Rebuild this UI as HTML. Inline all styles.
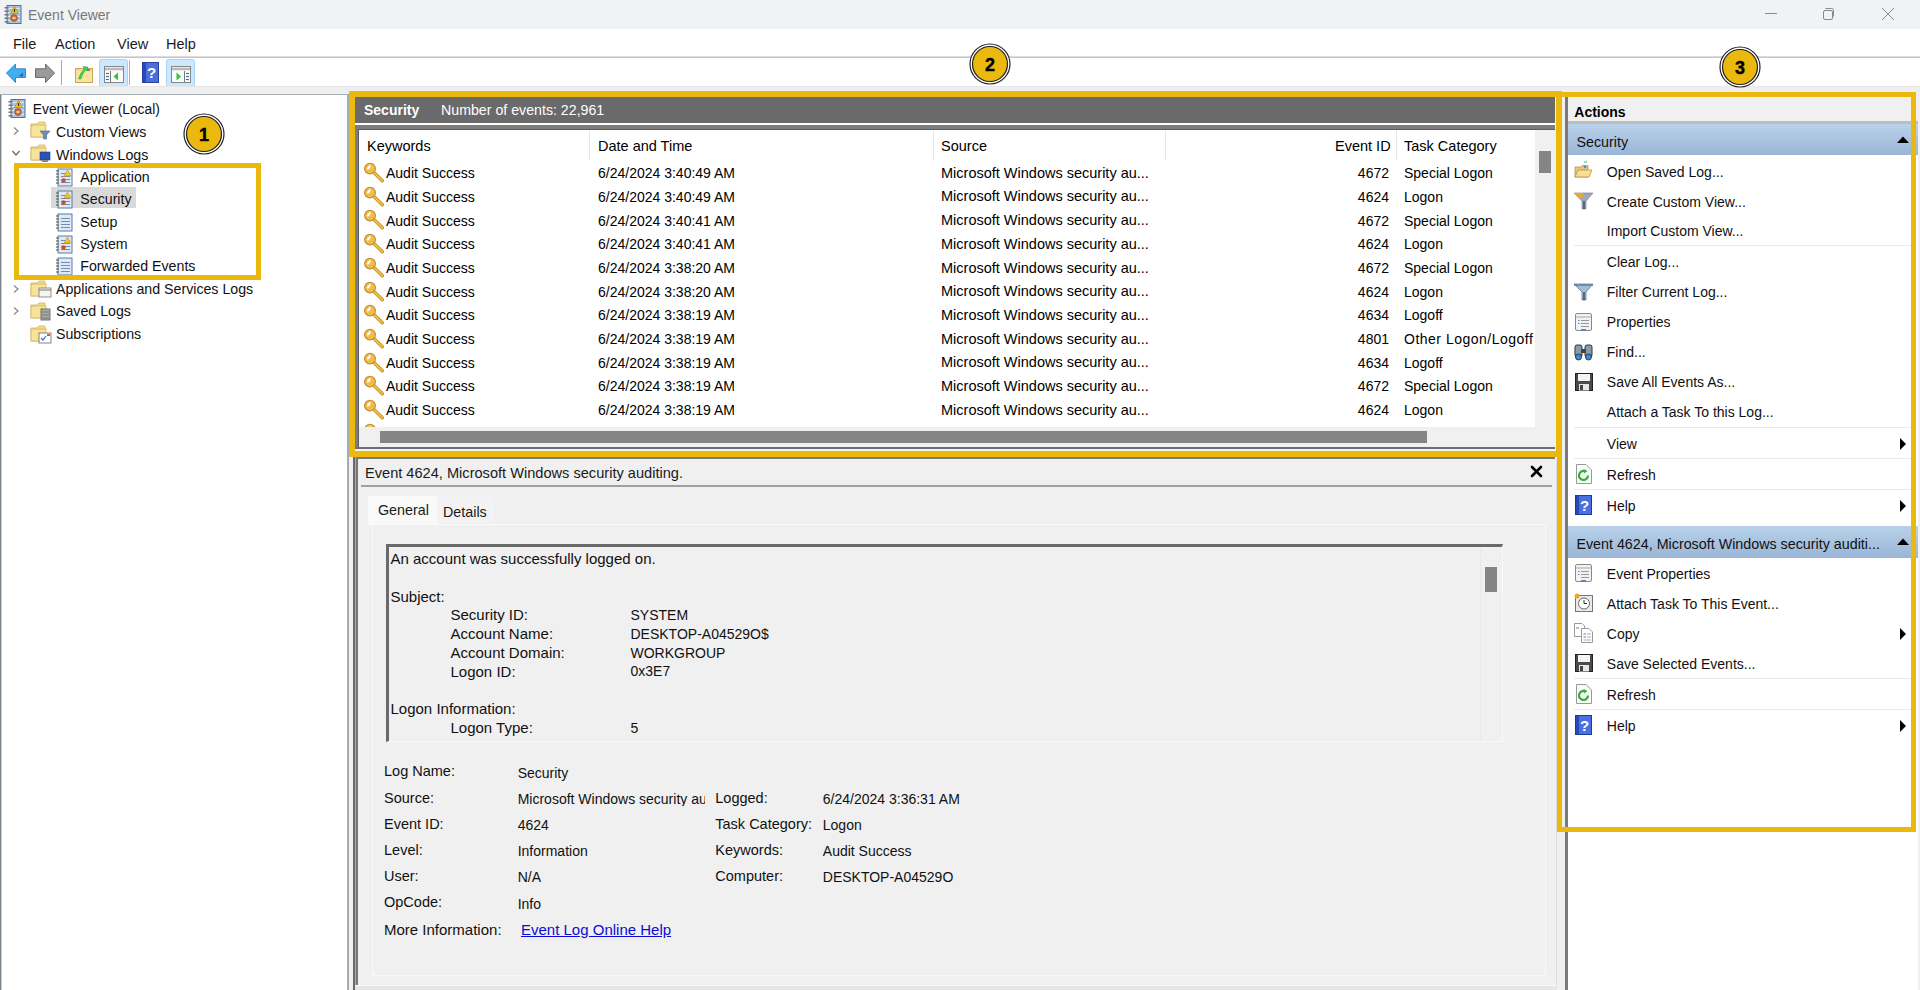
<!DOCTYPE html><html><head><meta charset="utf-8"><title>Event Viewer</title><style>
*{margin:0;padding:0;box-sizing:border-box}
html,body{width:1920px;height:990px;overflow:hidden;background:#fff;font-family:"Liberation Sans",sans-serif;}
.t{position:absolute;white-space:nowrap;line-height:1;}
.b{position:absolute;}
svg{position:absolute;overflow:visible}
</style></head><body>
<div class="b" style="left:0px;top:0px;width:1920px;height:29px;background:#f1f2f4"></div>
<div class="t" style="left:28px;top:7.75px;font-size:14px;color:#777;font-weight:normal;">Event Viewer</div>
<svg style="left:1760px;top:0" width="160" height="29"><g stroke="#8a8a8a" stroke-width="1" fill="none"><line x1="5" y1="13.5" x2="17" y2="13.5"/><rect x="63.5" y="10.5" width="9" height="9" rx="1.5"/><path d="M65.5 8.5 h6 a2 2 0 0 1 2 2 v6"/><line x1="122" y1="8" x2="134" y2="20"/><line x1="134" y1="8" x2="122" y2="20"/></g></svg>
<div class="b" style="left:0px;top:29px;width:1920px;height:27px;background:#fff"></div>
<div class="t" style="left:13px;top:37.13px;font-size:14.5px;color:#1b1b1b;font-weight:normal;">File</div>
<div class="t" style="left:55px;top:37.13px;font-size:14.5px;color:#1b1b1b;font-weight:normal;">Action</div>
<div class="t" style="left:117px;top:37.13px;font-size:14.5px;color:#1b1b1b;font-weight:normal;">View</div>
<div class="t" style="left:166px;top:37.13px;font-size:14.5px;color:#1b1b1b;font-weight:normal;">Help</div>
<div class="b" style="left:0px;top:56px;width:1920px;height:1px;background:#dcdcdc"></div>
<div class="b" style="left:0px;top:57px;width:1920px;height:1px;background:#c6c6c6"></div>
<div class="b" style="left:0px;top:58px;width:1920px;height:28px;background:#fff"></div>
<svg style="left:0;top:58px" width="200" height="28"><path d="M6.5 15 L15.5 6 V10.8 H25.5 V19.5 H15.5 V24.5 Z" fill="#3eb0ef" stroke="#4a7fd0" stroke-width="1"/><path d="M19 18 L23 14.5 V18.5 Z" fill="#3a50c0"/><path d="M54.5 15 L45.5 6 V10.8 H35.5 V19.5 H45.5 V24.5 Z" fill="#9a9a9a" stroke="#6a6a6a" stroke-width="1"/><line x1="61.5" y1="2" x2="61.5" y2="27" stroke="#a8a8a8" stroke-width="1"/><rect x="75.5" y="10.5" width="17" height="14" fill="#f4d98a" stroke="#c9a55a" stroke-width="1"/><rect x="76" y="13" width="16" height="11" fill="#f8e3a0"/><rect x="86" y="11" width="4" height="2" fill="#4a8de0"/><path d="M78.5 21 Q80 15 84 11 L83 8.5 L88 9 L86.5 13 L85.5 12 Q82.5 15.5 81 21 Z" fill="#4ccc4a" stroke="#3aa03a" stroke-width="0.5"/><rect x="99.5" y="1.5" width="28" height="27" rx="2" fill="#cce8ff" stroke="#a6d3f7" stroke-width="1"/><line x1="129.5" y1="2" x2="129.5" y2="27" stroke="#b0b0b0" stroke-width="1"/><rect x="104.5" y="8.5" width="19" height="16" fill="#eaeaea" stroke="#858585" stroke-width="1"/><line x1="105" y1="11" x2="123" y2="11" stroke="#888" stroke-width="1"/><rect x="105" y="13" width="5" height="11" fill="#fff"/><rect x="111" y="13" width="12" height="11" fill="#fafafa"/><line x1="110.5" y1="13" x2="110.5" y2="24" stroke="#777" stroke-width="1"/><g stroke="#3b6fb5" stroke-width="1.2"><line x1="106" y1="15.5" x2="109" y2="15.5"/><line x1="106" y1="18.5" x2="109" y2="18.5"/><line x1="106" y1="21.5" x2="109" y2="21.5"/></g><path d="M113.5 18.5 L118 14.5 V22.5 Z" fill="#3cbf3c"/><rect x="142.5" y="4.5" width="16" height="20" fill="#4a6fe0" stroke="#2a3f9a" stroke-width="1"/><rect x="143" y="5" width="3" height="19" fill="#2c47b8"/><text x="151.5" y="20" text-anchor="middle" font-family="Liberation Sans" font-weight="bold" font-size="15" fill="#fff">?</text><rect x="166.5" y="1.5" width="28" height="27" rx="2" fill="#cce8ff" stroke="#a6d3f7" stroke-width="1"/><rect x="171.5" y="8.5" width="19" height="16" fill="#eaeaea" stroke="#858585" stroke-width="1"/><line x1="172" y1="11" x2="190" y2="11" stroke="#888" stroke-width="1"/><rect x="172" y="13" width="12" height="11" fill="#fafafa"/><rect x="185" y="13" width="5" height="11" fill="#fff"/><line x1="184.5" y1="13" x2="184.5" y2="24" stroke="#777" stroke-width="1"/><g stroke="#3b6fb5" stroke-width="1.2"><line x1="186" y1="15.5" x2="189" y2="15.5"/><line x1="186" y1="18.5" x2="189" y2="18.5"/><line x1="186" y1="21.5" x2="189" y2="21.5"/></g><path d="M176.5 14.5 L181 18.5 L176.5 22.5 Z" fill="#3cbf3c"/></svg>
<div class="b" style="left:0px;top:86px;width:1920px;height:8px;background:#efefef"></div>
<div class="b" style="left:0px;top:86px;width:1920px;height:1px;background:#e6e6e6"></div>
<div class="b" style="left:0px;top:94px;width:349px;height:896px;background:#fff;border:1px solid #a6aeb6;border-left:1px solid #7e868e;border-right:2px solid #a3abb3;border-bottom:none;box-shadow:inset 1px 0 #c4c9ce"></div>
<div class="b" style="left:349px;top:94px;width:4px;height:896px;background:#f0f0f0"></div>
<div class="b" style="left:7px;top:99px;width:19px;height:19px"><svg width="20" height="20" viewBox="0 0 20 20"><rect x="4" y="0.5" width="14" height="18" fill="#a9c3e0" stroke="#4f74a0" stroke-width="1"/><g stroke="#dbe7f4" stroke-width="1"><line x1="5" y1="3.5" x2="17" y2="3.5"/><line x1="5" y1="7.5" x2="17" y2="7.5"/><line x1="5" y1="11.5" x2="17" y2="11.5"/><line x1="5" y1="15.5" x2="17" y2="15.5"/></g><g fill="#777"><rect x="1.5" y="2" width="4" height="1.5"/><rect x="1.5" y="5.5" width="4" height="1.5"/><rect x="1.5" y="9" width="4" height="1.5"/><rect x="1.5" y="12.5" width="4" height="1.5"/><rect x="1.5" y="16" width="4" height="1.5"/></g><path d="M11.5 1.5 L15.5 8.5 H7.5 Z" fill="#f2c12e" stroke="#a88410" stroke-width="0.7"/><line x1="11.5" y1="4" x2="11.5" y2="7" stroke="#333" stroke-width="1.2"/><circle cx="11" cy="13" r="3.3" fill="#d8703a" stroke="#8a4420" stroke-width="0.8"/><rect x="9.5" y="12" width="3" height="2" fill="#f2c8a8"/></svg></div>
<div class="t" style="left:32.8px;top:103.22px;font-size:13.8px;color:#111;font-weight:normal;">Event Viewer (Local)</div>
<svg style="left:12px;top:126px" width="8" height="10"><path d="M2 1.5 L6 5 L2 8.5" stroke="#888" stroke-width="1.2" fill="none"/></svg>
<svg style="left:11px;top:149px" width="10" height="8"><path d="M1.5 2 L5 6 L8.5 2" stroke="#666" stroke-width="1.2" fill="none"/></svg>
<svg style="left:12px;top:284px" width="8" height="10"><path d="M2 1.5 L6 5 L2 8.5" stroke="#888" stroke-width="1.2" fill="none"/></svg>
<svg style="left:12px;top:306px" width="8" height="10"><path d="M2 1.5 L6 5 L2 8.5" stroke="#888" stroke-width="1.2" fill="none"/></svg>
<div class="b" style="left:30px;top:120px"><svg width="22" height="20" viewBox="0 0 22 20"><path d="M1 4 H7 L9 2 H15 V17 H1 Z" fill="#f3dc8c" stroke="#d2b461" stroke-width="0.8"/><rect x="1" y="5" width="15" height="12" fill="#f6e39c" stroke="#d2b461" stroke-width="0.8"/><path d="M10 11 H20 L16.5 15 V19 H13.5 V15 Z" fill="#6b8fb5" stroke="#4a6d93" stroke-width="0.6"/></svg></div>
<div class="b" style="left:30px;top:143px"><svg width="22" height="20" viewBox="0 0 22 20"><path d="M1 4 H7 L9 2 H15 V17 H1 Z" fill="#f3dc8c" stroke="#d2b461" stroke-width="0.8"/><rect x="1" y="5" width="15" height="12" fill="#f6e39c" stroke="#d2b461" stroke-width="0.8"/><rect x="10" y="9" width="10" height="8" fill="#2a52b8" stroke="#1a3a8a" stroke-width="0.6"/><rect x="12" y="17" width="6" height="2" fill="#888"/></svg></div>
<div class="t" style="left:56px;top:125.08px;font-size:14.2px;color:#111;font-weight:normal;">Custom Views</div>
<div class="t" style="left:56px;top:147.58px;font-size:14.2px;color:#111;font-weight:normal;">Windows Logs</div>
<div class="b" style="left:51px;top:187px;width:85px;height:21px;background:#d9d9d9"></div>
<div class="b" style="left:55px;top:167.8px;width:19px;height:19px"><svg width="19" height="19" viewBox="0 0 19 19"><rect x="3" y="1" width="14" height="17" fill="#dfe9f5" stroke="#5a7ba6" stroke-width="1"/><g stroke="#6f8fb8" stroke-width="1"><line x1="6" y1="5.5" x2="15" y2="5.5"/><line x1="6" y1="8.5" x2="15" y2="8.5"/><line x1="6" y1="11.5" x2="15" y2="11.5"/><line x1="6" y1="14.5" x2="15" y2="14.5"/></g><g stroke="#666" stroke-width="1.2"><line x1="1" y1="3" x2="4" y2="3"/><line x1="1" y1="6" x2="4" y2="6"/><line x1="1" y1="9" x2="4" y2="9"/><line x1="1" y1="12" x2="4" y2="12"/><line x1="1" y1="15" x2="4" y2="15"/></g><path d="M12.5 2 L16 8 H9 Z" fill="#f2c530" stroke="#c99a10" stroke-width="0.6"/><circle cx="8.5" cy="12.5" r="2.2" fill="#c4542a"/></svg></div>
<div class="t" style="left:80.3px;top:169.78px;font-size:14.2px;color:#111;font-weight:normal;">Application</div>
<div class="b" style="left:55px;top:190.20000000000002px;width:19px;height:19px"><svg width="19" height="19" viewBox="0 0 19 19"><rect x="3" y="1" width="14" height="17" fill="#dfe9f5" stroke="#5a7ba6" stroke-width="1"/><g stroke="#6f8fb8" stroke-width="1"><line x1="6" y1="5.5" x2="15" y2="5.5"/><line x1="6" y1="8.5" x2="15" y2="8.5"/><line x1="6" y1="11.5" x2="15" y2="11.5"/><line x1="6" y1="14.5" x2="15" y2="14.5"/></g><g stroke="#666" stroke-width="1.2"><line x1="1" y1="3" x2="4" y2="3"/><line x1="1" y1="6" x2="4" y2="6"/><line x1="1" y1="9" x2="4" y2="9"/><line x1="1" y1="12" x2="4" y2="12"/><line x1="1" y1="15" x2="4" y2="15"/></g><path d="M12.5 2 L16 8 H9 Z" fill="#f2c530" stroke="#c99a10" stroke-width="0.6"/><circle cx="8.5" cy="12.5" r="2.2" fill="#c4542a"/></svg></div>
<div class="t" style="left:80.3px;top:192.18px;font-size:14.2px;color:#111;font-weight:normal;">Security</div>
<div class="b" style="left:55px;top:212.60000000000002px;width:19px;height:19px"><svg width="19" height="19" viewBox="0 0 19 19"><rect x="3" y="1" width="14" height="17" fill="#dfe9f5" stroke="#5a7ba6" stroke-width="1"/><g stroke="#6f8fb8" stroke-width="1"><line x1="6" y1="5.5" x2="15" y2="5.5"/><line x1="6" y1="8.5" x2="15" y2="8.5"/><line x1="6" y1="11.5" x2="15" y2="11.5"/><line x1="6" y1="14.5" x2="15" y2="14.5"/></g><g stroke="#666" stroke-width="1.2"><line x1="1" y1="3" x2="4" y2="3"/><line x1="1" y1="6" x2="4" y2="6"/><line x1="1" y1="9" x2="4" y2="9"/><line x1="1" y1="12" x2="4" y2="12"/><line x1="1" y1="15" x2="4" y2="15"/></g></svg></div>
<div class="t" style="left:80.3px;top:214.58px;font-size:14.2px;color:#111;font-weight:normal;">Setup</div>
<div class="b" style="left:55px;top:235.0px;width:19px;height:19px"><svg width="19" height="19" viewBox="0 0 19 19"><rect x="3" y="1" width="14" height="17" fill="#dfe9f5" stroke="#5a7ba6" stroke-width="1"/><g stroke="#6f8fb8" stroke-width="1"><line x1="6" y1="5.5" x2="15" y2="5.5"/><line x1="6" y1="8.5" x2="15" y2="8.5"/><line x1="6" y1="11.5" x2="15" y2="11.5"/><line x1="6" y1="14.5" x2="15" y2="14.5"/></g><g stroke="#666" stroke-width="1.2"><line x1="1" y1="3" x2="4" y2="3"/><line x1="1" y1="6" x2="4" y2="6"/><line x1="1" y1="9" x2="4" y2="9"/><line x1="1" y1="12" x2="4" y2="12"/><line x1="1" y1="15" x2="4" y2="15"/></g><path d="M12.5 2 L16 8 H9 Z" fill="#f2c530" stroke="#c99a10" stroke-width="0.6"/><circle cx="8.5" cy="12.5" r="2.2" fill="#c4542a"/></svg></div>
<div class="t" style="left:80.3px;top:236.98px;font-size:14.2px;color:#111;font-weight:normal;">System</div>
<div class="b" style="left:55px;top:257.4px;width:19px;height:19px"><svg width="19" height="19" viewBox="0 0 19 19"><rect x="3" y="1" width="14" height="17" fill="#dfe9f5" stroke="#5a7ba6" stroke-width="1"/><g stroke="#6f8fb8" stroke-width="1"><line x1="6" y1="5.5" x2="15" y2="5.5"/><line x1="6" y1="8.5" x2="15" y2="8.5"/><line x1="6" y1="11.5" x2="15" y2="11.5"/><line x1="6" y1="14.5" x2="15" y2="14.5"/></g><g stroke="#666" stroke-width="1.2"><line x1="1" y1="3" x2="4" y2="3"/><line x1="1" y1="6" x2="4" y2="6"/><line x1="1" y1="9" x2="4" y2="9"/><line x1="1" y1="12" x2="4" y2="12"/><line x1="1" y1="15" x2="4" y2="15"/></g></svg></div>
<div class="t" style="left:80.3px;top:259.38px;font-size:14.2px;color:#111;font-weight:normal;">Forwarded Events</div>
<div class="b" style="left:30px;top:279px"><svg width="22" height="20" viewBox="0 0 22 20"><path d="M1 4 H7 L9 2 H15 V17 H1 Z" fill="#f3dc8c" stroke="#d2b461" stroke-width="0.8"/><rect x="1" y="5" width="15" height="12" fill="#f6e39c" stroke="#d2b461" stroke-width="0.8"/><rect x="9" y="9" width="12" height="9" fill="#f5f5f5" stroke="#777" stroke-width="0.8"/><line x1="9" y1="11" x2="21" y2="11" stroke="#777" stroke-width="1"/></svg></div>
<div class="b" style="left:30px;top:301px"><svg width="22" height="20" viewBox="0 0 22 20"><path d="M1 4 H7 L9 2 H15 V17 H1 Z" fill="#f3dc8c" stroke="#d2b461" stroke-width="0.8"/><rect x="1" y="5" width="15" height="12" fill="#f6e39c" stroke="#d2b461" stroke-width="0.8"/><rect x="11" y="8" width="9" height="11" fill="#b0b0b0" stroke="#555" stroke-width="0.8"/><g stroke="#555" stroke-width="0.7"><line x1="12" y1="11" x2="19" y2="11"/><line x1="12" y1="14" x2="19" y2="14"/><line x1="12" y1="17" x2="19" y2="17"/></g></svg></div>
<div class="b" style="left:30px;top:324px"><svg width="22" height="20" viewBox="0 0 22 20"><path d="M1 4 H7 L9 2 H15 V17 H1 Z" fill="#f3dc8c" stroke="#d2b461" stroke-width="0.8"/><rect x="1" y="5" width="15" height="12" fill="#f6e39c" stroke="#d2b461" stroke-width="0.8"/><rect x="9" y="9" width="12" height="10" fill="#fff" stroke="#666" stroke-width="0.8"/><path d="M11 14 l2 2 l3 -4" stroke="#2a70c8" stroke-width="1.2" fill="none"/><rect x="17" y="10" width="3" height="2" fill="#d45a2a"/></svg></div>
<div class="t" style="left:56px;top:282.08px;font-size:14.2px;color:#111;font-weight:normal;">Applications and Services Logs</div>
<div class="t" style="left:56px;top:304.38px;font-size:14.2px;color:#111;font-weight:normal;">Saved Logs</div>
<div class="t" style="left:56px;top:326.98px;font-size:14.2px;color:#111;font-weight:normal;">Subscriptions</div>
<div class="b" style="left:3px;top:5px;width:19px;height:19px"><svg width="20" height="20" viewBox="0 0 20 20"><rect x="4" y="0.5" width="14" height="18" fill="#a9c3e0" stroke="#4f74a0" stroke-width="1"/><g stroke="#dbe7f4" stroke-width="1"><line x1="5" y1="3.5" x2="17" y2="3.5"/><line x1="5" y1="7.5" x2="17" y2="7.5"/><line x1="5" y1="11.5" x2="17" y2="11.5"/><line x1="5" y1="15.5" x2="17" y2="15.5"/></g><g fill="#777"><rect x="1.5" y="2" width="4" height="1.5"/><rect x="1.5" y="5.5" width="4" height="1.5"/><rect x="1.5" y="9" width="4" height="1.5"/><rect x="1.5" y="12.5" width="4" height="1.5"/><rect x="1.5" y="16" width="4" height="1.5"/></g><path d="M11.5 1.5 L15.5 8.5 H7.5 Z" fill="#f2c12e" stroke="#a88410" stroke-width="0.7"/><line x1="11.5" y1="4" x2="11.5" y2="7" stroke="#333" stroke-width="1.2"/><circle cx="11" cy="13" r="3.3" fill="#d8703a" stroke="#8a4420" stroke-width="0.8"/><rect x="9.5" y="12" width="3" height="2" fill="#f2c8a8"/></svg></div>
<div class="b" style="left:353px;top:94px;width:1209px;height:896px;background:#f0f0f0"></div>
<div class="b" style="left:355px;top:97px;width:1200px;height:26px;background:#6a6a6a"></div>
<div class="t" style="left:364px;top:103.15px;font-size:14px;color:#fff;font-weight:bold;">Security</div>
<div class="t" style="left:441px;top:102.98px;font-size:14.2px;color:#fff;font-weight:normal;">Number of events: 22,961</div>
<div class="b" style="left:355px;top:123px;width:1200px;height:2px;background:#fff"></div>
<div class="b" style="left:355px;top:125px;width:1200px;height:323px;background:#7d7d7d"></div>
<div class="b" style="left:358px;top:129px;width:1197px;height:318px;background:#f0f0f0;border-left:1px solid #5e5e5e;border-top:1px solid #5e5e5e"></div>
<div class="b" style="left:355px;top:447px;width:1200px;height:2px;background:#6e6e6e"></div>
<div class="b" style="left:355px;top:449px;width:1200px;height:2px;background:#f4f4f4"></div>
<div class="b" style="left:359px;top:130px;width:1176px;height:297px;background:#fff"></div>
<div class="b" style="left:589px;top:130px;width:1px;height:30px;background:#e5e5e5"></div>
<div class="b" style="left:933px;top:130px;width:1px;height:30px;background:#e5e5e5"></div>
<div class="b" style="left:1165px;top:130px;width:1px;height:30px;background:#e5e5e5"></div>
<div class="b" style="left:1396px;top:130px;width:1px;height:30px;background:#e5e5e5"></div>
<div class="t" style="left:367px;top:139.43px;font-size:14.5px;color:#000;font-weight:normal;">Keywords</div>
<div class="t" style="left:598px;top:139.43px;font-size:14.5px;color:#000;font-weight:normal;">Date and Time</div>
<div class="t" style="left:941px;top:139.43px;font-size:14.5px;color:#000;font-weight:normal;">Source</div>
<div class="t" style="left:1335px;top:139.43px;font-size:14.5px;color:#000;font-weight:normal;">Event ID</div>
<div class="t" style="left:1404px;top:139.43px;font-size:14.5px;color:#000;font-weight:normal;">Task Category</div>
<div class="b" style="left:363px;top:162.0px"><svg width="22" height="22" viewBox="0 0 22 22"><path d="M10.8 10.4 L19.3 18.8" stroke="#c08b2a" stroke-width="3.4" stroke-linecap="round"/><path d="M10.8 10.4 L19.3 18.8" stroke="#f6c940" stroke-width="1.6" stroke-linecap="round"/><circle cx="7" cy="6.6" r="5.4" fill="#f3bd45" stroke="#b98a3a" stroke-width="1.1"/><ellipse cx="5.9" cy="5.5" rx="2.5" ry="1.2" transform="rotate(-50 5.9 5.5)" fill="#fff"/></svg></div>
<div class="t" style="left:386px;top:166.15px;font-size:14px;color:#000;font-weight:normal;">Audit Success</div>
<div class="t" style="left:598px;top:166.15px;font-size:14px;color:#000;font-weight:normal;">6/24/2024 3:40:49 AM</div>
<div class="t" style="left:941px;top:165.73px;font-size:14.5px;color:#000;font-weight:normal;">Microsoft Windows security au...</div>
<div class="t" style="right:531px;top:166.15px;font-size:14px">4672</div>
<div class="t" style="left:1404px;top:166.15px;font-size:14px;color:#000;font-weight:normal;">Special Logon</div>
<div class="b" style="left:363px;top:185.7px"><svg width="22" height="22" viewBox="0 0 22 22"><path d="M10.8 10.4 L19.3 18.8" stroke="#c08b2a" stroke-width="3.4" stroke-linecap="round"/><path d="M10.8 10.4 L19.3 18.8" stroke="#f6c940" stroke-width="1.6" stroke-linecap="round"/><circle cx="7" cy="6.6" r="5.4" fill="#f3bd45" stroke="#b98a3a" stroke-width="1.1"/><ellipse cx="5.9" cy="5.5" rx="2.5" ry="1.2" transform="rotate(-50 5.9 5.5)" fill="#fff"/></svg></div>
<div class="t" style="left:386px;top:189.85px;font-size:14px;color:#000;font-weight:normal;">Audit Success</div>
<div class="t" style="left:598px;top:189.85px;font-size:14px;color:#000;font-weight:normal;">6/24/2024 3:40:49 AM</div>
<div class="t" style="left:941px;top:189.43px;font-size:14.5px;color:#000;font-weight:normal;">Microsoft Windows security au...</div>
<div class="t" style="right:531px;top:189.85px;font-size:14px">4624</div>
<div class="t" style="left:1404px;top:189.85px;font-size:14px;color:#000;font-weight:normal;">Logon</div>
<div class="b" style="left:363px;top:209.4px"><svg width="22" height="22" viewBox="0 0 22 22"><path d="M10.8 10.4 L19.3 18.8" stroke="#c08b2a" stroke-width="3.4" stroke-linecap="round"/><path d="M10.8 10.4 L19.3 18.8" stroke="#f6c940" stroke-width="1.6" stroke-linecap="round"/><circle cx="7" cy="6.6" r="5.4" fill="#f3bd45" stroke="#b98a3a" stroke-width="1.1"/><ellipse cx="5.9" cy="5.5" rx="2.5" ry="1.2" transform="rotate(-50 5.9 5.5)" fill="#fff"/></svg></div>
<div class="t" style="left:386px;top:213.55px;font-size:14px;color:#000;font-weight:normal;">Audit Success</div>
<div class="t" style="left:598px;top:213.55px;font-size:14px;color:#000;font-weight:normal;">6/24/2024 3:40:41 AM</div>
<div class="t" style="left:941px;top:213.13px;font-size:14.5px;color:#000;font-weight:normal;">Microsoft Windows security au...</div>
<div class="t" style="right:531px;top:213.55px;font-size:14px">4672</div>
<div class="t" style="left:1404px;top:213.55px;font-size:14px;color:#000;font-weight:normal;">Special Logon</div>
<div class="b" style="left:363px;top:233.1px"><svg width="22" height="22" viewBox="0 0 22 22"><path d="M10.8 10.4 L19.3 18.8" stroke="#c08b2a" stroke-width="3.4" stroke-linecap="round"/><path d="M10.8 10.4 L19.3 18.8" stroke="#f6c940" stroke-width="1.6" stroke-linecap="round"/><circle cx="7" cy="6.6" r="5.4" fill="#f3bd45" stroke="#b98a3a" stroke-width="1.1"/><ellipse cx="5.9" cy="5.5" rx="2.5" ry="1.2" transform="rotate(-50 5.9 5.5)" fill="#fff"/></svg></div>
<div class="t" style="left:386px;top:237.25px;font-size:14px;color:#000;font-weight:normal;">Audit Success</div>
<div class="t" style="left:598px;top:237.25px;font-size:14px;color:#000;font-weight:normal;">6/24/2024 3:40:41 AM</div>
<div class="t" style="left:941px;top:236.83px;font-size:14.5px;color:#000;font-weight:normal;">Microsoft Windows security au...</div>
<div class="t" style="right:531px;top:237.25px;font-size:14px">4624</div>
<div class="t" style="left:1404px;top:237.25px;font-size:14px;color:#000;font-weight:normal;">Logon</div>
<div class="b" style="left:363px;top:256.8px"><svg width="22" height="22" viewBox="0 0 22 22"><path d="M10.8 10.4 L19.3 18.8" stroke="#c08b2a" stroke-width="3.4" stroke-linecap="round"/><path d="M10.8 10.4 L19.3 18.8" stroke="#f6c940" stroke-width="1.6" stroke-linecap="round"/><circle cx="7" cy="6.6" r="5.4" fill="#f3bd45" stroke="#b98a3a" stroke-width="1.1"/><ellipse cx="5.9" cy="5.5" rx="2.5" ry="1.2" transform="rotate(-50 5.9 5.5)" fill="#fff"/></svg></div>
<div class="t" style="left:386px;top:260.95px;font-size:14px;color:#000;font-weight:normal;">Audit Success</div>
<div class="t" style="left:598px;top:260.95px;font-size:14px;color:#000;font-weight:normal;">6/24/2024 3:38:20 AM</div>
<div class="t" style="left:941px;top:260.53px;font-size:14.5px;color:#000;font-weight:normal;">Microsoft Windows security au...</div>
<div class="t" style="right:531px;top:260.95px;font-size:14px">4672</div>
<div class="t" style="left:1404px;top:260.95px;font-size:14px;color:#000;font-weight:normal;">Special Logon</div>
<div class="b" style="left:363px;top:280.5px"><svg width="22" height="22" viewBox="0 0 22 22"><path d="M10.8 10.4 L19.3 18.8" stroke="#c08b2a" stroke-width="3.4" stroke-linecap="round"/><path d="M10.8 10.4 L19.3 18.8" stroke="#f6c940" stroke-width="1.6" stroke-linecap="round"/><circle cx="7" cy="6.6" r="5.4" fill="#f3bd45" stroke="#b98a3a" stroke-width="1.1"/><ellipse cx="5.9" cy="5.5" rx="2.5" ry="1.2" transform="rotate(-50 5.9 5.5)" fill="#fff"/></svg></div>
<div class="t" style="left:386px;top:284.65px;font-size:14px;color:#000;font-weight:normal;">Audit Success</div>
<div class="t" style="left:598px;top:284.65px;font-size:14px;color:#000;font-weight:normal;">6/24/2024 3:38:20 AM</div>
<div class="t" style="left:941px;top:284.23px;font-size:14.5px;color:#000;font-weight:normal;">Microsoft Windows security au...</div>
<div class="t" style="right:531px;top:284.65px;font-size:14px">4624</div>
<div class="t" style="left:1404px;top:284.65px;font-size:14px;color:#000;font-weight:normal;">Logon</div>
<div class="b" style="left:363px;top:304.2px"><svg width="22" height="22" viewBox="0 0 22 22"><path d="M10.8 10.4 L19.3 18.8" stroke="#c08b2a" stroke-width="3.4" stroke-linecap="round"/><path d="M10.8 10.4 L19.3 18.8" stroke="#f6c940" stroke-width="1.6" stroke-linecap="round"/><circle cx="7" cy="6.6" r="5.4" fill="#f3bd45" stroke="#b98a3a" stroke-width="1.1"/><ellipse cx="5.9" cy="5.5" rx="2.5" ry="1.2" transform="rotate(-50 5.9 5.5)" fill="#fff"/></svg></div>
<div class="t" style="left:386px;top:308.35px;font-size:14px;color:#000;font-weight:normal;">Audit Success</div>
<div class="t" style="left:598px;top:308.35px;font-size:14px;color:#000;font-weight:normal;">6/24/2024 3:38:19 AM</div>
<div class="t" style="left:941px;top:307.93px;font-size:14.5px;color:#000;font-weight:normal;">Microsoft Windows security au...</div>
<div class="t" style="right:531px;top:308.35px;font-size:14px">4634</div>
<div class="t" style="left:1404px;top:308.35px;font-size:14px;color:#000;font-weight:normal;">Logoff</div>
<div class="b" style="left:363px;top:327.9px"><svg width="22" height="22" viewBox="0 0 22 22"><path d="M10.8 10.4 L19.3 18.8" stroke="#c08b2a" stroke-width="3.4" stroke-linecap="round"/><path d="M10.8 10.4 L19.3 18.8" stroke="#f6c940" stroke-width="1.6" stroke-linecap="round"/><circle cx="7" cy="6.6" r="5.4" fill="#f3bd45" stroke="#b98a3a" stroke-width="1.1"/><ellipse cx="5.9" cy="5.5" rx="2.5" ry="1.2" transform="rotate(-50 5.9 5.5)" fill="#fff"/></svg></div>
<div class="t" style="left:386px;top:332.05px;font-size:14px;color:#000;font-weight:normal;">Audit Success</div>
<div class="t" style="left:598px;top:332.05px;font-size:14px;color:#000;font-weight:normal;">6/24/2024 3:38:19 AM</div>
<div class="t" style="left:941px;top:331.63px;font-size:14.5px;color:#000;font-weight:normal;">Microsoft Windows security au...</div>
<div class="t" style="right:531px;top:332.05px;font-size:14px">4801</div>
<div class="t" style="left:1404px;top:332.05px;font-size:14px;color:#000;font-weight:normal;letter-spacing:0.5px">Other Logon/Logoff</div>
<div class="b" style="left:363px;top:351.6px"><svg width="22" height="22" viewBox="0 0 22 22"><path d="M10.8 10.4 L19.3 18.8" stroke="#c08b2a" stroke-width="3.4" stroke-linecap="round"/><path d="M10.8 10.4 L19.3 18.8" stroke="#f6c940" stroke-width="1.6" stroke-linecap="round"/><circle cx="7" cy="6.6" r="5.4" fill="#f3bd45" stroke="#b98a3a" stroke-width="1.1"/><ellipse cx="5.9" cy="5.5" rx="2.5" ry="1.2" transform="rotate(-50 5.9 5.5)" fill="#fff"/></svg></div>
<div class="t" style="left:386px;top:355.75px;font-size:14px;color:#000;font-weight:normal;">Audit Success</div>
<div class="t" style="left:598px;top:355.75px;font-size:14px;color:#000;font-weight:normal;">6/24/2024 3:38:19 AM</div>
<div class="t" style="left:941px;top:355.33px;font-size:14.5px;color:#000;font-weight:normal;">Microsoft Windows security au...</div>
<div class="t" style="right:531px;top:355.75px;font-size:14px">4634</div>
<div class="t" style="left:1404px;top:355.75px;font-size:14px;color:#000;font-weight:normal;">Logoff</div>
<div class="b" style="left:363px;top:375.3px"><svg width="22" height="22" viewBox="0 0 22 22"><path d="M10.8 10.4 L19.3 18.8" stroke="#c08b2a" stroke-width="3.4" stroke-linecap="round"/><path d="M10.8 10.4 L19.3 18.8" stroke="#f6c940" stroke-width="1.6" stroke-linecap="round"/><circle cx="7" cy="6.6" r="5.4" fill="#f3bd45" stroke="#b98a3a" stroke-width="1.1"/><ellipse cx="5.9" cy="5.5" rx="2.5" ry="1.2" transform="rotate(-50 5.9 5.5)" fill="#fff"/></svg></div>
<div class="t" style="left:386px;top:379.45px;font-size:14px;color:#000;font-weight:normal;">Audit Success</div>
<div class="t" style="left:598px;top:379.45px;font-size:14px;color:#000;font-weight:normal;">6/24/2024 3:38:19 AM</div>
<div class="t" style="left:941px;top:379.03px;font-size:14.5px;color:#000;font-weight:normal;">Microsoft Windows security au...</div>
<div class="t" style="right:531px;top:379.45px;font-size:14px">4672</div>
<div class="t" style="left:1404px;top:379.45px;font-size:14px;color:#000;font-weight:normal;">Special Logon</div>
<div class="b" style="left:363px;top:399.0px"><svg width="22" height="22" viewBox="0 0 22 22"><path d="M10.8 10.4 L19.3 18.8" stroke="#c08b2a" stroke-width="3.4" stroke-linecap="round"/><path d="M10.8 10.4 L19.3 18.8" stroke="#f6c940" stroke-width="1.6" stroke-linecap="round"/><circle cx="7" cy="6.6" r="5.4" fill="#f3bd45" stroke="#b98a3a" stroke-width="1.1"/><ellipse cx="5.9" cy="5.5" rx="2.5" ry="1.2" transform="rotate(-50 5.9 5.5)" fill="#fff"/></svg></div>
<div class="t" style="left:386px;top:403.15px;font-size:14px;color:#000;font-weight:normal;">Audit Success</div>
<div class="t" style="left:598px;top:403.15px;font-size:14px;color:#000;font-weight:normal;">6/24/2024 3:38:19 AM</div>
<div class="t" style="left:941px;top:402.73px;font-size:14.5px;color:#000;font-weight:normal;">Microsoft Windows security au...</div>
<div class="t" style="right:531px;top:403.15px;font-size:14px">4624</div>
<div class="t" style="left:1404px;top:403.15px;font-size:14px;color:#000;font-weight:normal;">Logon</div>
<div class="b" style="left:363px;top:422px;width:30px;height:5px;overflow:hidden"><div class="b" style="left:0;top:0.7px"><svg width="22" height="22" viewBox="0 0 22 22"><path d="M10.8 10.4 L19.3 18.8" stroke="#c08b2a" stroke-width="3.4" stroke-linecap="round"/><path d="M10.8 10.4 L19.3 18.8" stroke="#f6c940" stroke-width="1.6" stroke-linecap="round"/><circle cx="7" cy="6.6" r="5.4" fill="#f3bd45" stroke="#b98a3a" stroke-width="1.1"/><ellipse cx="5.9" cy="5.5" rx="2.5" ry="1.2" transform="rotate(-50 5.9 5.5)" fill="#fff"/></svg></div></div>
<div class="b" style="left:1535px;top:130px;width:20px;height:297px;background:#f0f0f0"></div>
<div class="b" style="left:1539px;top:151px;width:12px;height:22px;background:#858585"></div>
<div class="b" style="left:359px;top:427px;width:1176px;height:20px;background:#f0f0f0"></div>
<div class="b" style="left:380px;top:431px;width:1047px;height:12px;background:#858585"></div>
<div class="b" style="left:353px;top:457px;width:1202px;height:533px;background:#f0f0f0;border-top:2px solid #7a7a7a"></div>
<div class="b" style="left:353px;top:457px;width:5px;height:533px;background:linear-gradient(90deg,#6a6a6a 0,#6a6a6a 2px,#a8a8a8 2px,#a8a8a8 3px,#777 3px,#777 5px)"></div>
<div class="t" style="left:365px;top:465.64px;font-size:14.6px;color:#1a1a1a;font-weight:normal;">Event 4624, Microsoft Windows security auditing.</div>
<svg style="left:1530px;top:465px" width="13" height="13"><path d="M2 2 L11 11 M11 2 L2 11" stroke="#000" stroke-width="2.6" stroke-linecap="round"/></svg>
<div class="b" style="left:361px;top:485px;width:1191px;height:2px;background:#a0a0a0"></div>
<div class="b" style="left:355px;top:985px;width:1202px;height:1px;background:#fafafa"></div>
<div class="b" style="left:355px;top:986px;width:1202px;height:4px;background:#e6e6e6"></div>
<div class="b" style="left:1556px;top:459px;width:1px;height:527px;background:#dedede"></div>
<div class="b" style="left:368px;top:496px;width:69px;height:29px;background:#f9f9f9"></div>
<div class="b" style="left:437px;top:497px;width:56px;height:26px;background:#f3f3f3"></div>
<div class="t" style="left:378px;top:502.90px;font-size:14.3px;color:#1a1a1a;font-weight:normal;">General</div>
<div class="t" style="left:443px;top:505.30px;font-size:14.3px;color:#1a1a1a;font-weight:normal;">Details</div>
<div class="b" style="left:372px;top:524px;width:1174px;height:452px;background:#f0f0f0;border:1px solid #f9f9f9"></div>
<div class="b" style="left:386px;top:544px;width:1117px;height:198px;background:#f0f0f0;border-top:3px solid #6a6a6a;border-left:3px solid #6a6a6a;border-right:1px solid #fafafa;border-bottom:1px solid #fafafa"></div>
<div class="b" style="left:1480px;top:548px;width:22px;height:193px;background:#f0f0f0;border-left:1px solid #e8e8e8"></div>
<div class="b" style="left:1485px;top:567px;width:12px;height:25px;background:#858585"></div>
<div class="t" style="left:390.5px;top:550.80px;font-size:15px;color:#111;font-weight:normal;">An account was successfully logged on.</div>
<div class="t" style="left:390.5px;top:588.55px;font-size:15px;color:#111;font-weight:normal;">Subject:</div>
<div class="t" style="left:450.5px;top:607.30px;font-size:15px;color:#111;font-weight:normal;">Security ID:</div>
<div class="t" style="left:630.5px;top:608.15px;font-size:14px;color:#111;font-weight:normal;">SYSTEM</div>
<div class="t" style="left:450.5px;top:626.05px;font-size:15px;color:#111;font-weight:normal;">Account Name:</div>
<div class="t" style="left:630.5px;top:626.90px;font-size:14px;color:#111;font-weight:normal;">DESKTOP-A04529O$</div>
<div class="t" style="left:450.5px;top:644.80px;font-size:15px;color:#111;font-weight:normal;">Account Domain:</div>
<div class="t" style="left:630.5px;top:645.65px;font-size:14px;color:#111;font-weight:normal;">WORKGROUP</div>
<div class="t" style="left:450.5px;top:663.55px;font-size:15px;color:#111;font-weight:normal;">Logon ID:</div>
<div class="t" style="left:630.5px;top:664.40px;font-size:14px;color:#111;font-weight:normal;">0x3E7</div>
<div class="t" style="left:390.5px;top:701.05px;font-size:15px;color:#111;font-weight:normal;">Logon Information:</div>
<div class="t" style="left:450.5px;top:719.80px;font-size:15px;color:#111;font-weight:normal;">Logon Type:</div>
<div class="t" style="left:630.5px;top:720.65px;font-size:14px;color:#111;font-weight:normal;">5</div>
<div class="t" style="left:384px;top:764.33px;font-size:14.5px;color:#111;font-weight:normal;">Log Name:</div>
<div class="t" style="left:517.7px;top:765.55px;font-size:14px;color:#111;font-weight:normal;">Security</div>
<div class="t" style="left:384px;top:790.53px;font-size:14.5px;color:#111;font-weight:normal;">Source:</div>
<div class="t" style="left:517.7px;top:791.75px;font-size:14px;color:#111;width:187px;overflow:hidden">Microsoft Windows security auditing.</div>
<div class="t" style="left:715.3px;top:790.53px;font-size:14.5px;color:#111;font-weight:normal;">Logged:</div>
<div class="t" style="left:822.8px;top:791.75px;font-size:14px;color:#111;font-weight:normal;">6/24/2024 3:36:31 AM</div>
<div class="t" style="left:384px;top:816.73px;font-size:14.5px;color:#111;font-weight:normal;">Event ID:</div>
<div class="t" style="left:517.7px;top:817.95px;font-size:14px;color:#111;font-weight:normal;">4624</div>
<div class="t" style="left:715.3px;top:816.73px;font-size:14.5px;color:#111;font-weight:normal;">Task Category:</div>
<div class="t" style="left:822.8px;top:817.95px;font-size:14px;color:#111;font-weight:normal;">Logon</div>
<div class="t" style="left:384px;top:842.93px;font-size:14.5px;color:#111;font-weight:normal;">Level:</div>
<div class="t" style="left:517.7px;top:844.15px;font-size:14px;color:#111;font-weight:normal;">Information</div>
<div class="t" style="left:715.3px;top:842.93px;font-size:14.5px;color:#111;font-weight:normal;">Keywords:</div>
<div class="t" style="left:822.8px;top:844.15px;font-size:14px;color:#111;font-weight:normal;">Audit Success</div>
<div class="t" style="left:384px;top:869.13px;font-size:14.5px;color:#111;font-weight:normal;">User:</div>
<div class="t" style="left:517.7px;top:870.35px;font-size:14px;color:#111;font-weight:normal;">N/A</div>
<div class="t" style="left:715.3px;top:869.13px;font-size:14.5px;color:#111;font-weight:normal;">Computer:</div>
<div class="t" style="left:822.8px;top:870.35px;font-size:14px;color:#111;font-weight:normal;">DESKTOP-A04529O</div>
<div class="t" style="left:384px;top:895.33px;font-size:14.5px;color:#111;font-weight:normal;">OpCode:</div>
<div class="t" style="left:517.7px;top:896.55px;font-size:14px;color:#111;font-weight:normal;">Info</div>
<div class="t" style="left:384px;top:921.50px;font-size:15px;color:#111;font-weight:normal;">More Information:</div>
<div class="t" style="left:521px;top:922.10px;font-size:15px;color:#0b0bd8;font-weight:normal;text-decoration:underline">Event Log Online Help</div>
<div class="b" style="left:1562px;top:94px;width:358px;height:896px;background:#f0f0f0"></div>
<div class="b" style="left:1565px;top:97px;width:3px;height:893px;background:#7a7a7a"></div>
<div class="b" style="left:1568px;top:97px;width:350px;height:893px;background:#fff"></div>
<div class="b" style="left:1568px;top:97px;width:350px;height:24px;background:#f0f0f0"></div>
<div class="b" style="left:1568px;top:121px;width:350px;height:3px;background:#bdbdbd"></div>
<div class="t" style="left:1574.3px;top:104.95px;font-size:14px;color:#000;font-weight:bold;">Actions</div>
<div class="b" style="left:1568px;top:124px;width:350px;height:31px;background:linear-gradient(#b9d1ea,#9ab5d6)"></div>
<div class="t" style="left:1576.4px;top:134.90px;font-size:14.3px;color:#111;font-weight:normal;">Security</div>
<svg style="left:1897px;top:136px" width="13" height="8"><path d="M0 7 L6 0.5 L12 7 Z" fill="#000"/></svg>
<div class="t" style="left:1606.8px;top:164.95px;font-size:14px;color:#111;font-weight:normal;">Open Saved Log...</div>
<div class="t" style="left:1606.8px;top:194.65px;font-size:14px;color:#111;font-weight:normal;">Create Custom View...</div>
<div class="t" style="left:1606.8px;top:224.35px;font-size:14px;color:#111;font-weight:normal;">Import Custom View...</div>
<div class="t" style="left:1606.8px;top:255.15px;font-size:14px;color:#111;font-weight:normal;">Clear Log...</div>
<div class="t" style="left:1606.8px;top:285.15px;font-size:14px;color:#111;font-weight:normal;">Filter Current Log...</div>
<div class="t" style="left:1606.8px;top:315.15px;font-size:14px;color:#111;font-weight:normal;">Properties</div>
<div class="t" style="left:1606.8px;top:345.15px;font-size:14px;color:#111;font-weight:normal;">Find...</div>
<div class="t" style="left:1606.8px;top:375.15px;font-size:14px;color:#111;font-weight:normal;">Save All Events As...</div>
<div class="t" style="left:1606.8px;top:405.15px;font-size:14px;color:#111;font-weight:normal;">Attach a Task To this Log...</div>
<div class="t" style="left:1606.8px;top:436.65px;font-size:14px;color:#111;font-weight:normal;">View</div>
<div class="t" style="left:1606.8px;top:467.65px;font-size:14px;color:#111;font-weight:normal;">Refresh</div>
<div class="t" style="left:1606.8px;top:498.65px;font-size:14px;color:#111;font-weight:normal;">Help</div>
<div class="b" style="left:1574px;top:245px;width:337px;height:1px;background:#e9e9e9"></div>
<div class="b" style="left:1574px;top:427px;width:337px;height:1px;background:#e9e9e9"></div>
<div class="b" style="left:1574px;top:458px;width:337px;height:1px;background:#e9e9e9"></div>
<div class="b" style="left:1574px;top:489px;width:337px;height:1px;background:#e9e9e9"></div>
<div class="b" style="left:1568px;top:526px;width:350px;height:32px;background:linear-gradient(#b9d1ea,#9ab5d6)"></div>
<div class="t" style="left:1576.4px;top:536.90px;font-size:14.3px;color:#111;font-weight:normal;">Event 4624, Microsoft Windows security auditi...</div>
<svg style="left:1897px;top:538px" width="13" height="8"><path d="M0 7 L6 0.5 L12 7 Z" fill="#000"/></svg>
<div class="t" style="left:1606.8px;top:566.65px;font-size:14px;color:#111;font-weight:normal;">Event Properties</div>
<div class="t" style="left:1606.8px;top:596.65px;font-size:14px;color:#111;font-weight:normal;">Attach Task To This Event...</div>
<div class="t" style="left:1606.8px;top:626.65px;font-size:14px;color:#111;font-weight:normal;">Copy</div>
<div class="t" style="left:1606.8px;top:656.65px;font-size:14px;color:#111;font-weight:normal;">Save Selected Events...</div>
<div class="t" style="left:1606.8px;top:687.65px;font-size:14px;color:#111;font-weight:normal;">Refresh</div>
<div class="t" style="left:1606.8px;top:718.65px;font-size:14px;color:#111;font-weight:normal;">Help</div>
<div class="b" style="left:1574px;top:678px;width:337px;height:1px;background:#e9e9e9"></div>
<div class="b" style="left:1574px;top:709px;width:337px;height:1px;background:#e9e9e9"></div>
<svg style="left:1900px;top:437.5px" width="7" height="12"><path d="M0 0 L6 6 L0 12 Z" fill="#000"/></svg>
<svg style="left:1900px;top:499.5px" width="7" height="12"><path d="M0 0 L6 6 L0 12 Z" fill="#000"/></svg>
<svg style="left:1900px;top:627.5px" width="7" height="12"><path d="M0 0 L6 6 L0 12 Z" fill="#000"/></svg>
<svg style="left:1900px;top:719.5px" width="7" height="12"><path d="M0 0 L6 6 L0 12 Z" fill="#000"/></svg>
<svg style="left:1573px;top:160px" width="22" height="22" viewBox="0 0 22 22"><path d="M2 7 H8 L9.5 5.5 H15 V17 H2 Z" fill="#e9c872" stroke="#b9934a" stroke-width="0.8"/><path d="M2 17 L5 10 H19 L16 17 Z" fill="#f6de95" stroke="#b9934a" stroke-width="0.8"/><circle cx="12" cy="7" r="1.3" fill="#4a8de0"/><line x1="11" y1="2" x2="14" y2="2" stroke="#3cbf3c" stroke-width="1"/></svg>
<svg style="left:1573px;top:190px" width="22" height="22" viewBox="0 0 22 22"><path d="M1 3 H20 L13 11 V19 H9 V11 Z" fill="#9aaabb" stroke="#6b7b8b" stroke-width="0.6"/><path d="M1 3 H10 L9 9 L5 7 Z" fill="#f0a820"/><path d="M10 11 V19 H12 V11Z" fill="#5a6a7a"/></svg>
<svg style="left:1573px;top:281px" width="22" height="22" viewBox="0 0 22 22"><path d="M1 3 H20 L13 11 V19 H9 V11 Z" fill="#a8bccc" stroke="#5b7b9b" stroke-width="0.8"/><rect x="1" y="3" width="19" height="2" fill="#6b8bab"/><path d="M10 11 V19 H12 V11Z" fill="#4a6a8a"/></svg>
<svg style="left:1573px;top:311px" width="22" height="22" viewBox="0 0 22 22"><rect x="2.5" y="2.5" width="16" height="17" rx="1.5" fill="#f2f2f2" stroke="#8a8a8a" stroke-width="1"/><line x1="3" y1="6" x2="18" y2="6" stroke="#aaa"/><g stroke="#4a8ad0" stroke-width="1"><line x1="5" y1="9.5" x2="6.5" y2="9.5"/><line x1="5" y1="12.5" x2="6.5" y2="12.5"/></g><g stroke="#999" stroke-width="1"><line x1="8" y1="9.5" x2="16" y2="9.5"/><line x1="8" y1="12.5" x2="16" y2="12.5"/><line x1="8" y1="15.5" x2="16" y2="15.5"/></g><rect x="8" y="18" width="5" height="2" fill="#4a8ad0"/></svg>
<svg style="left:1573px;top:341px" width="22" height="22" viewBox="0 0 22 22"><rect x="2" y="4" width="7" height="12" rx="2" fill="#8a9aaa" stroke="#333" stroke-width="1"/><rect x="12" y="4" width="7" height="12" rx="2" fill="#8a9aaa" stroke="#333" stroke-width="1"/><circle cx="5.5" cy="16" r="3" fill="#3a8ae0" stroke="#222" stroke-width="0.8"/><circle cx="15.5" cy="16" r="3" fill="#3a8ae0" stroke="#222" stroke-width="0.8"/><rect x="8" y="8" width="5" height="4" fill="#444"/></svg>
<svg style="left:1573px;top:371px" width="22" height="22" viewBox="0 0 22 22"><rect x="2.5" y="2.5" width="17" height="17" fill="#4a4a4a" stroke="#222" stroke-width="1"/><rect x="5" y="3" width="12" height="7" fill="#f4f4f4"/><rect x="6" y="13" width="10" height="6.5" fill="#e8e8e8"/><rect x="7" y="14" width="3" height="5" fill="#444"/></svg>
<svg style="left:1573px;top:463px" width="22" height="22" viewBox="0 0 22 22"><path d="M3.5 1.5 H13 L18.5 7 V20.5 H3.5 Z" fill="#fafafa" stroke="#999" stroke-width="1"/><path d="M15 12.5 A4.5 4.5 0 1 1 12 8.2" stroke="#30b030" stroke-width="2.2" fill="none"/><path d="M10.5 6 L14.5 8 L11 10.5 Z" fill="#30b030"/></svg>
<svg style="left:1573px;top:494px" width="22" height="22" viewBox="0 0 22 22"><rect x="2.5" y="1.5" width="16" height="19" fill="#4870de" stroke="#22389a" stroke-width="1"/><rect x="3" y="2" width="3" height="18" fill="#2c47b8"/><text x="11.5" y="16.5" text-anchor="middle" font-family="Liberation Sans" font-weight="bold" font-size="15" fill="#fff">?</text></svg>
<svg style="left:1573px;top:562px" width="22" height="22" viewBox="0 0 22 22"><rect x="2.5" y="2.5" width="16" height="17" rx="1.5" fill="#f2f2f2" stroke="#8a8a8a" stroke-width="1"/><line x1="3" y1="6" x2="18" y2="6" stroke="#aaa"/><g stroke="#4a8ad0" stroke-width="1"><line x1="5" y1="9.5" x2="6.5" y2="9.5"/><line x1="5" y1="12.5" x2="6.5" y2="12.5"/></g><g stroke="#999" stroke-width="1"><line x1="8" y1="9.5" x2="16" y2="9.5"/><line x1="8" y1="12.5" x2="16" y2="12.5"/><line x1="8" y1="15.5" x2="16" y2="15.5"/></g><rect x="8" y="18" width="5" height="2" fill="#4a8ad0"/></svg>
<svg style="left:1573px;top:592px" width="22" height="22" viewBox="0 0 22 22"><rect x="2.5" y="3.5" width="17" height="16" fill="#e8e8e8" stroke="#777" stroke-width="1"/><circle cx="11" cy="11.5" r="5.5" fill="#fff" stroke="#666" stroke-width="1"/><path d="M11 8 V11.5 H14" stroke="#333" stroke-width="1" fill="none"/><circle cx="4" cy="4" r="2.5" fill="#f0a820"/></svg>
<svg style="left:1573px;top:622px" width="22" height="22" viewBox="0 0 22 22"><path d="M1.5 1.5 H9 L11.5 4 V14.5 H1.5 Z" fill="#fff" stroke="#999" stroke-width="1"/><path d="M8.5 6.5 H16 L19.5 10 V20.5 H8.5 Z" fill="#fff" stroke="#999" stroke-width="1"/><g stroke="#4a8ad0" stroke-width="1"><line x1="3" y1="6" x2="6" y2="6"/><line x1="10.5" y1="12" x2="13" y2="12"/><line x1="10.5" y1="15" x2="13" y2="15"/></g><g stroke="#aaa"><line x1="14" y1="12" x2="18" y2="12"/><line x1="14" y1="15" x2="18" y2="15"/><line x1="10.5" y1="18" x2="18" y2="18"/></g></svg>
<svg style="left:1573px;top:652px" width="22" height="22" viewBox="0 0 22 22"><rect x="2.5" y="2.5" width="17" height="17" fill="#4a4a4a" stroke="#222" stroke-width="1"/><rect x="5" y="3" width="12" height="7" fill="#f4f4f4"/><rect x="6" y="13" width="10" height="6.5" fill="#e8e8e8"/><rect x="7" y="14" width="3" height="5" fill="#444"/></svg>
<svg style="left:1573px;top:683px" width="22" height="22" viewBox="0 0 22 22"><path d="M3.5 1.5 H13 L18.5 7 V20.5 H3.5 Z" fill="#fafafa" stroke="#999" stroke-width="1"/><path d="M15 12.5 A4.5 4.5 0 1 1 12 8.2" stroke="#30b030" stroke-width="2.2" fill="none"/><path d="M10.5 6 L14.5 8 L11 10.5 Z" fill="#30b030"/></svg>
<svg style="left:1573px;top:714px" width="22" height="22" viewBox="0 0 22 22"><rect x="2.5" y="1.5" width="16" height="19" fill="#4870de" stroke="#22389a" stroke-width="1"/><rect x="3" y="2" width="3" height="18" fill="#2c47b8"/><text x="11.5" y="16.5" text-anchor="middle" font-family="Liberation Sans" font-weight="bold" font-size="15" fill="#fff">?</text></svg>
<div class="b" style="left:14px;top:163px;width:247px;height:117px;border:5px solid #ebb90d"></div>
<div class="b" style="left:349px;top:91px;width:1213px;height:366px;border:6px solid #ebb90d"></div>
<div class="b" style="left:1557px;top:92px;width:359px;height:740px;border:5.5px solid #ebb90d"></div>
<svg style="left:182px;top:111.6px" width="44" height="44"><circle cx="22" cy="22" r="20" fill="#fff" stroke="#222" stroke-width="1.2"/><circle cx="22" cy="22" r="17.5" fill="#ebb90d" stroke="#222" stroke-width="1.2"/><text x="22" y="28.5" text-anchor="middle" font-family="Liberation Sans" font-weight="bold" font-size="18" fill="#000" stroke="#000" stroke-width="0.4">1</text></svg>
<svg style="left:968px;top:42px" width="44" height="44"><circle cx="22" cy="22" r="20" fill="#fff" stroke="#222" stroke-width="1.2"/><circle cx="22" cy="22" r="17.5" fill="#ebb90d" stroke="#222" stroke-width="1.2"/><text x="22" y="28.5" text-anchor="middle" font-family="Liberation Sans" font-weight="bold" font-size="18" fill="#000" stroke="#000" stroke-width="0.4">2</text></svg>
<svg style="left:1718px;top:45px" width="44" height="44"><circle cx="22" cy="22" r="20" fill="#fff" stroke="#222" stroke-width="1.2"/><circle cx="22" cy="22" r="17.5" fill="#ebb90d" stroke="#222" stroke-width="1.2"/><text x="22" y="28.5" text-anchor="middle" font-family="Liberation Sans" font-weight="bold" font-size="18" fill="#000" stroke="#000" stroke-width="0.4">3</text></svg>
</body></html>
